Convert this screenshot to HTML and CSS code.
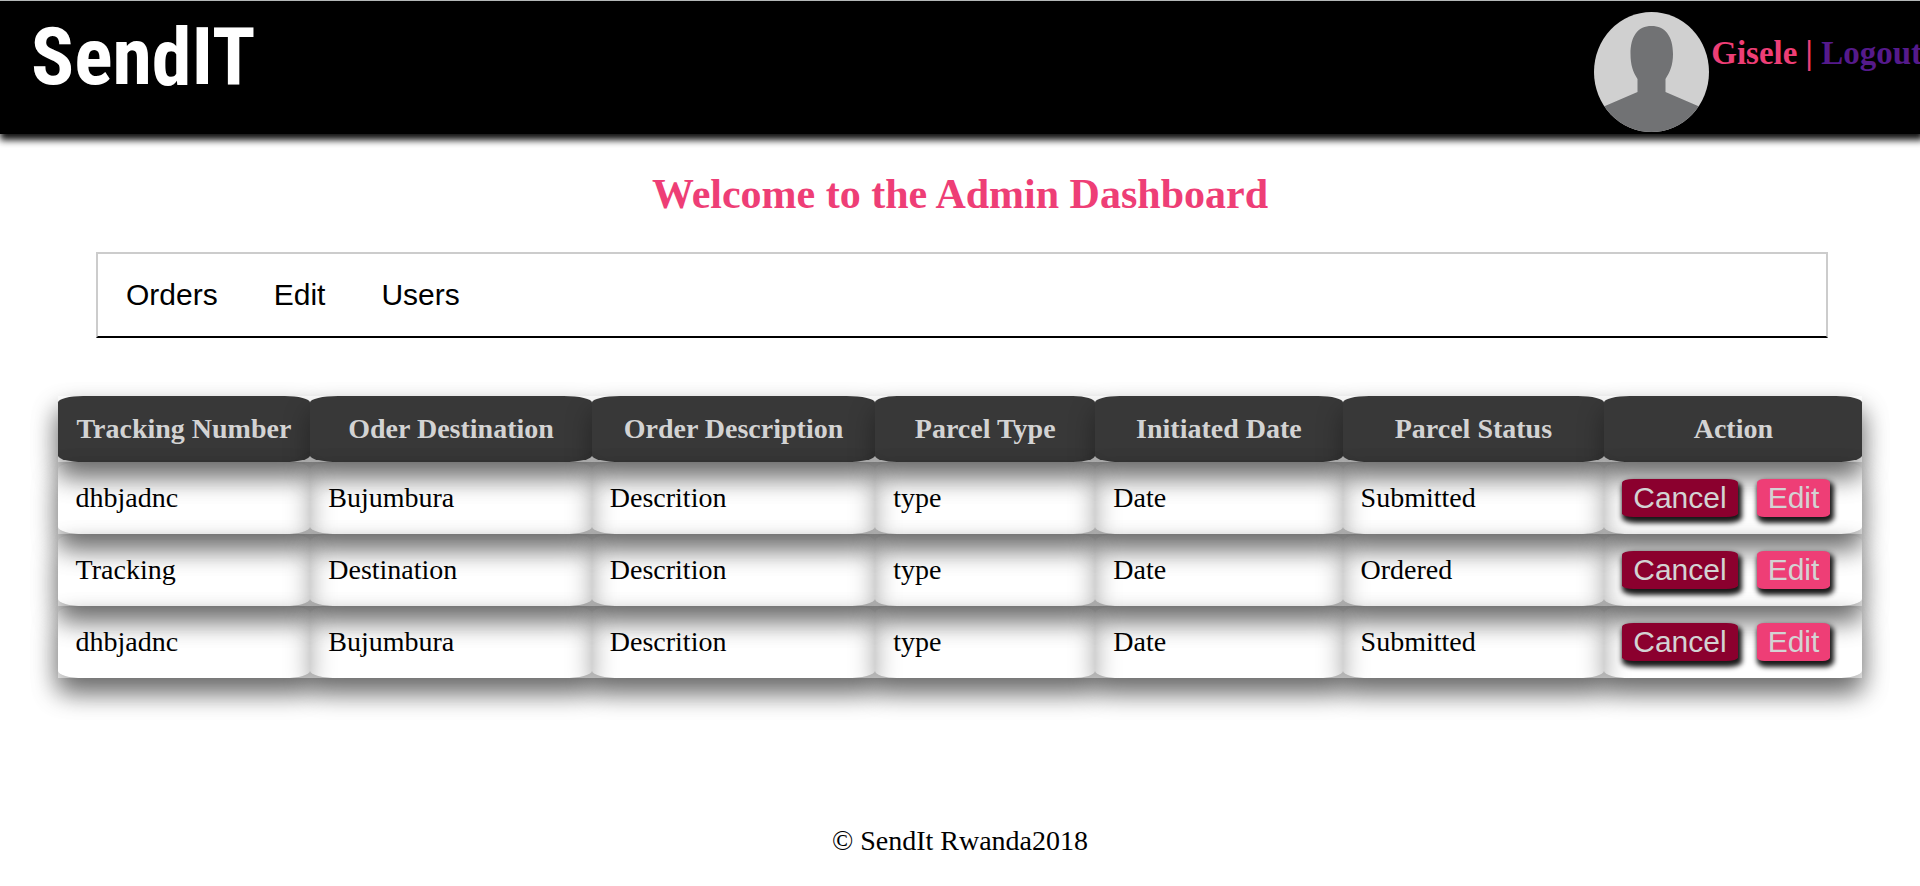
FILE: index.html
```html
<!DOCTYPE html>
<html lang="en">
<head>
<meta charset="utf-8">
<title>SendIT Admin Dashboard</title>
<link rel="stylesheet" href="styles.css">
</head>
<body>
<header class="site-header">
  <div class="logo">SendIT</div>
  <div class="account">
    <svg class="avatar" viewBox="0 0 115 120" role="img" aria-label="Profile picture">
      <rect width="115" height="120" fill="#d0d0d0"/>
      <path fill="#717274" d="M57.500 14C44 14 36.500 24 36.500 42C36.500 53 39 60 43.500 67V80L11 94L0 99V120H115V99L104 94L71.500 80V67C76 60 79 53 79 42C79 24 71 14 57.500 14Z"/>
    </svg>
    <h3 class="account-text">Gisele | <a class="logout" href="#">Logout</a></h3>
  </div>
</header>
<main>
  <h2 class="title">Welcome to the Admin Dashboard</h2>
  <nav class="tabs">
    <button class="tab" type="button">Orders</button>
    <button class="tab" type="button">Edit</button>
    <button class="tab" type="button">Users</button>
  </nav>
  <table class="orders">
    <colgroup>
      <col class="col-tracking"><col class="col-destination"><col class="col-description"><col class="col-type"><col class="col-date"><col class="col-status"><col class="col-action">
    </colgroup>
    <thead>
      <tr><th>Tracking Number</th><th>Oder Destination</th><th>Order Description</th><th>Parcel Type</th><th>Initiated Date</th><th>Parcel Status</th><th>Action</th></tr>
    </thead>
    <tbody>
      <tr><td>dhbjadnc</td><td>Bujumbura</td><td>Descrition</td><td>type</td><td>Date</td><td>Submitted</td><td class="actions"><button class="btn cancel" type="button">Cancel</button> <button class="btn edit" type="button">Edit</button></td></tr>
      <tr><td>Tracking</td><td>Destination</td><td>Descrition</td><td>type</td><td>Date</td><td>Ordered</td><td class="actions"><button class="btn cancel" type="button">Cancel</button> <button class="btn edit" type="button">Edit</button></td></tr>
      <tr><td>dhbjadnc</td><td>Bujumbura</td><td>Descrition</td><td>type</td><td>Date</td><td>Submitted</td><td class="actions"><button class="btn cancel" type="button">Cancel</button> <button class="btn edit" type="button">Edit</button></td></tr>
    </tbody>
  </table>
</main>
<footer class="site-footer">© SendIt Rwanda2018</footer>
</body>
</html>
```
FILE: styles.css
```css
body {
  margin: 0;
  border-top: 1px solid #b4b8b8;
  overflow-x: hidden;
  background: #fff;
  color: #000;
  font-family: "Liberation Serif", "Times New Roman", serif;
  font-size: 28px;
  line-height: 32px;
}

.site-header {
  display: flex;
  justify-content: space-between;
  align-items: flex-start;
  height: 133px;
  background: #000;
  box-shadow: 2px 4px 7px 2px #111;
}

.logo {
  padding: 8px 0 0 31px;
  color: #fff;
  font-family: "Roboto Condensed", "Liberation Sans Narrow", "Liberation Sans", sans-serif;
  font-size: 80px;
  font-weight: 700;
  line-height: 96px;
}

.account {
  display: flex;
  gap: 2px;
  padding-top: 11px;
  margin-right: -2px;
}

.avatar {
  width: 115px;
  height: 120px;
  border-radius: 50%;
}

.account-text {
  margin: 22px 0 0;
  color: #ee3e76;
  font-size: 33px;
  line-height: 38px;
  white-space: nowrap;
}

.logout {
  color: #551a8b;
  text-decoration: none;
}

.title {
  margin: 36px 0 34px;
  color: #ee3e76;
  font-size: 42px;
  line-height: 48px;
  text-align: center;
}

.tabs {
  display: flex;
  width: 90%;
  margin-left: 5%;
  border: 2px solid #ccc;
  border-bottom-color: #000;
}

.tab {
  padding: 24px 28px;
  border: 0;
  background: none;
  color: #000;
  font: 30px/34px "Liberation Sans", Arial, sans-serif;
}

.orders {
  width: 94%;
  margin: 58px auto 0;
  border-spacing: 0;
  border-collapse: collapse;
}

.orders tr,
.orders th,
.orders td {
  box-shadow: 0 14px 26px rgba(0, 0, 0, 0.36);
}

.orders th,
.orders td {
  padding: 17px 18px;
  border-radius: 10%;
  white-space: nowrap;
}

.orders th {
  background: #383838;
  color: #d3d3d3;
}

.orders td {
  text-align: left;
}

.col-tracking { width: 14%; }
.col-destination { width: 15.6%; }
.col-description { width: 15.7%; }
.col-type { width: 12.2%; }
.col-date { width: 13.7%; }
.col-status { width: 14.5%; }
.col-action { width: 14.3%; }

.btn {
  padding: 2px 11px;
  border: 0;
  border-radius: 10%;
  box-shadow: 2px 4px 5px 2px #1a1a1a;
  color: #d3d3d3;
  font: 30px/34px "Liberation Sans", Arial, sans-serif;
  vertical-align: top;
}

.cancel { background: #8b002e; }

.edit {
  margin-left: 12px;
  background: #ee3e76;
}

.site-footer {
  margin-top: 147px;
  padding-bottom: 24px;
  text-align: center;
}
```
